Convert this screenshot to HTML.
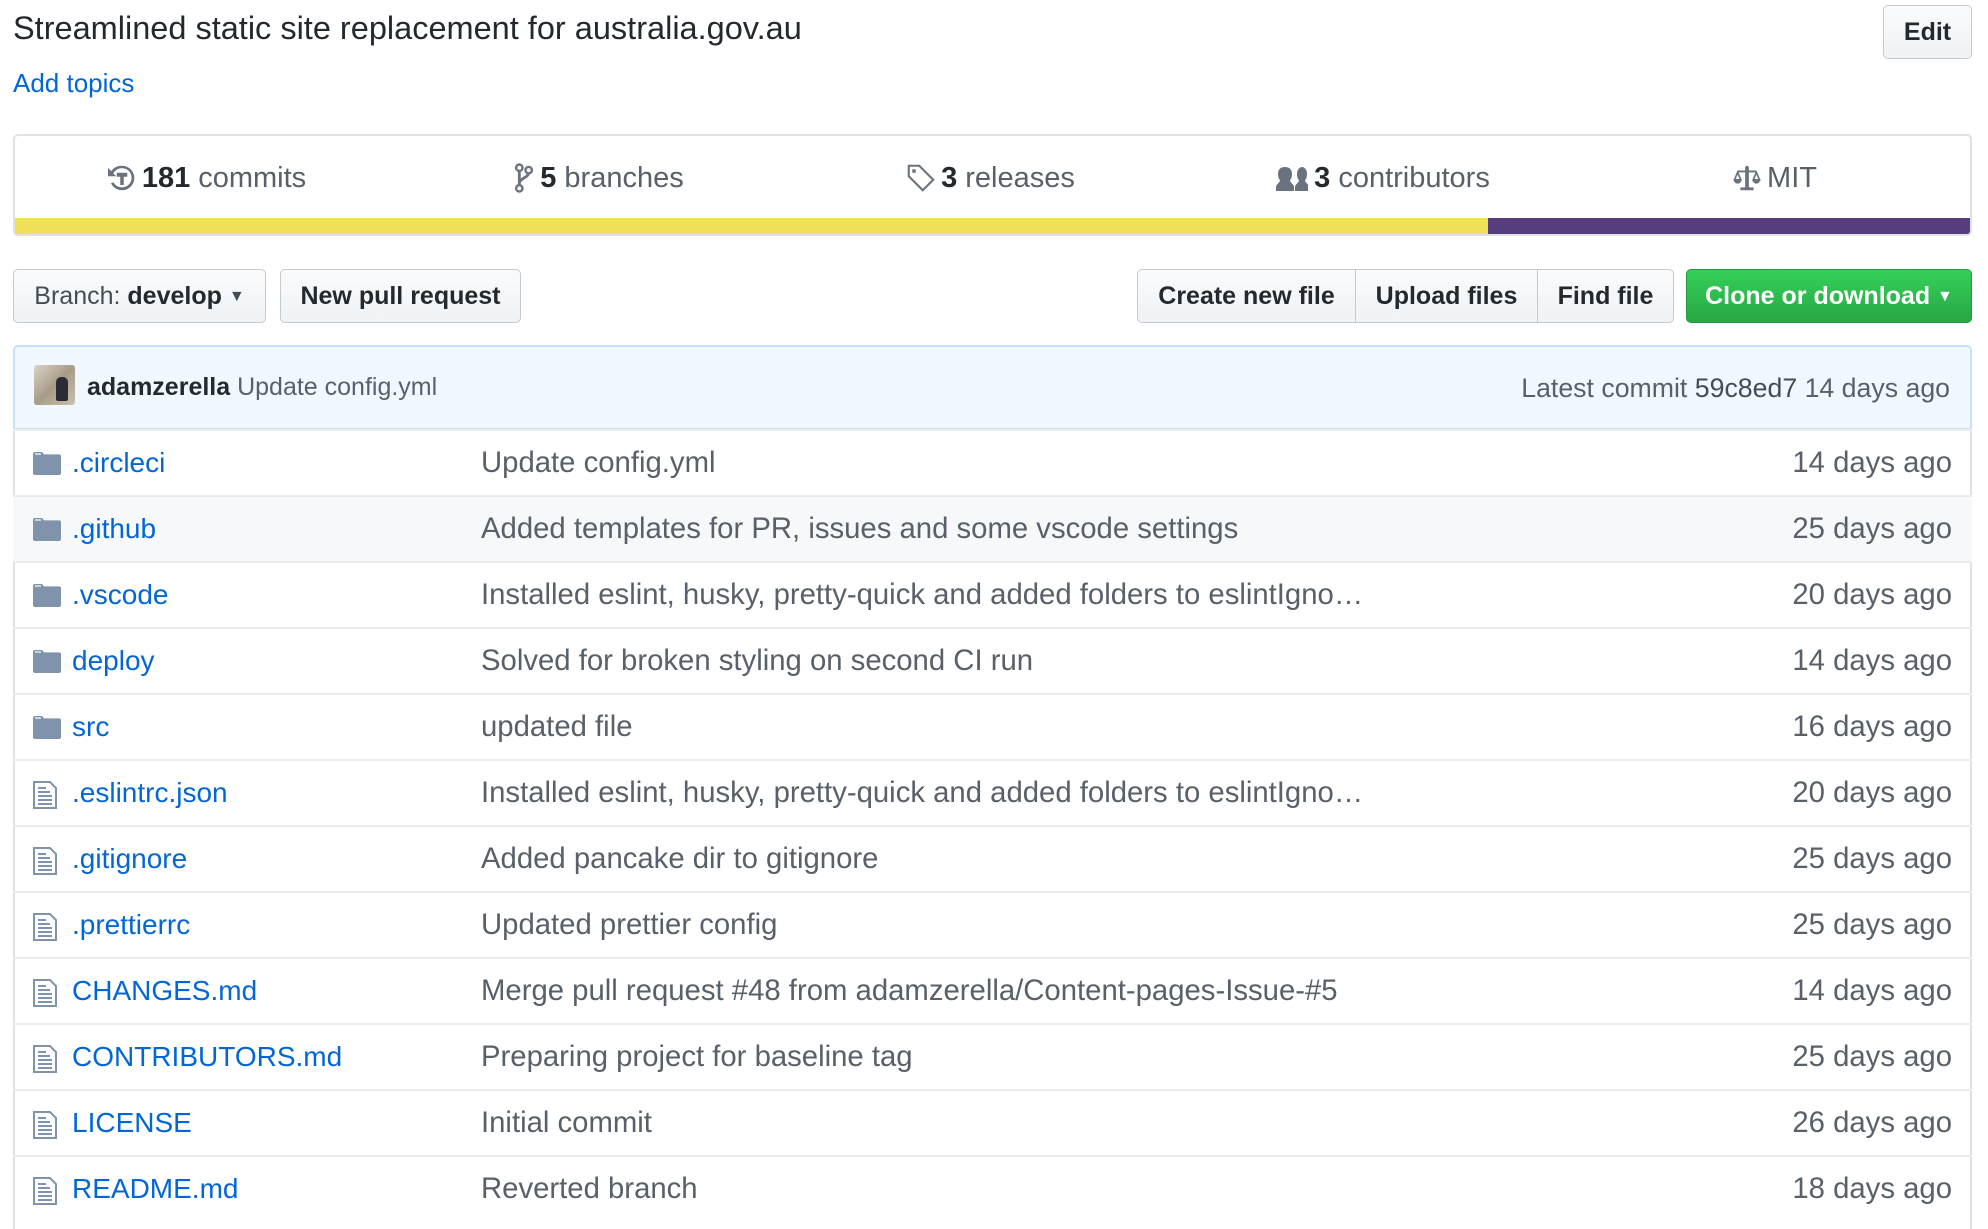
<!DOCTYPE html>
<html><head><meta charset="utf-8"><style>
*{box-sizing:border-box;margin:0;padding:0}
body{width:1988px;height:1208px;overflow:hidden;background:#fff;font-family:"Liberation Sans",Arial,sans-serif;color:#24292e;position:relative}
.abs{position:absolute}
.title{left:13px;top:7px;font-size:32.5px;line-height:42px;color:#24292e}
.topics{left:13px;top:68px;font-size:26px;line-height:30px;color:#0366d6}
.btn{position:absolute;height:54px;border:1px solid #c6cacf;border-radius:5px;background:linear-gradient(#fafbfc,#eff3f6);font-size:25px;font-weight:bold;line-height:52px;text-align:center;color:#24292e}
.stats{left:13px;top:134px;width:1959px;height:102px;border:2px solid #dfe2e5;border-radius:5px;overflow:hidden}
.stat{position:absolute;top:0;height:84px;width:392px;display:flex;align-items:center;justify-content:center;font-size:29px;color:#586069}
.stat b{color:#24292e;margin:0 8px 0 6px}
.bar{position:absolute;left:0;top:82px;height:18px;width:100%;background:#563d7c}
.bar i{position:absolute;left:0;top:0;height:18px;width:1473px;background:#f1e05a}
.commit{left:13px;top:345px;width:1959px;height:85px;background:#f1f8ff;border:2px solid #c8e1ff;border-radius:5px 5px 0 0}
.rows{left:13px;top:429px;width:1959px;height:800px;border-left:2px solid #dfe2e5;border-right:2px solid #dfe2e5}
.row{position:absolute;left:0;width:100%;height:66px;border-top:2px solid #eaecef;font-size:29.3px}
.row .ic{position:absolute;left:20px;top:20px}
.row .n{position:absolute;left:59px;top:0;line-height:64px;color:#0366d6;font-size:28px}
.row .m{position:absolute;left:468px;top:0;line-height:64px;color:#586069}
.row .a{position:absolute;right:20px;top:0;line-height:64px;color:#586069}
</style></head><body>
<div class="abs title">Streamlined static site replacement for australia.gov.au</div>
<div class="btn" style="left:1883px;top:5px;width:89px;">Edit</div>
<div class="abs topics">Add topics</div>

<div class="abs stats">
 <div class="stat" style="left:-4px"><svg width="28" height="28" viewBox="0 0 16 16"><path fill="#6a737d" d="M8 1a7 7 0 1 1-6.3 10l1.4-.6A5.5 5.5 0 1 0 3 5.5L4.8 7H0V2.2l1.9 1.9A7 7 0 0 1 8 1zM5 5h6v2.3H9V12H7V7.3H5z"/></svg><b>181</b>commits</div>
 <div class="stat" style="left:388px"><svg width="20" height="30" viewBox="0 0 10 16"><path fill="none" stroke="#6a737d" stroke-width="1.5" d="M2.5 3v10M2.5 11c0-3 5-3 5-6"/><circle cx="2.5" cy="2.5" r="1.7" fill="#fff" stroke="#6a737d" stroke-width="1.3"/><circle cx="7.5" cy="3.8" r="1.7" fill="#fff" stroke="#6a737d" stroke-width="1.3"/><circle cx="2.5" cy="13.5" r="1.7" fill="#fff" stroke="#6a737d" stroke-width="1.3"/></svg><b>5</b>branches</div>
 <div class="stat" style="left:780px"><svg width="28" height="28" viewBox="0 0 16 16"><path fill="none" stroke="#6a737d" stroke-width="1.2" d="M1 1h6l8 8-6 6-8-8z"/><rect x="3" y="3" width="2" height="2" fill="#6a737d"/></svg><b>3</b>releases</div>
 <div class="stat" style="left:1172px"><svg width="32" height="26" viewBox="0 0 16 13"><path fill="#6a737d" d="M9.5 13v-2c0-1.5 2-2 2-3.5 0 0-1-.5-1-3S12 1 13 1s2.5 1 2.5 3.5-1 3-1 3c0 1.5 2 2 2 3.5v2zM0 13v-2c0-1.5 2-2 2-3.5 0 0-1-.5-1-3S2.5 1 4.5 1 8 2 8 4.5s-1 3-1 3c0 1.5 2 2 2 3.5v2z"/></svg><b>3</b>contributors</div>
 <div class="stat" style="left:1564px"><svg width="28" height="30" viewBox="0 0 14 16"><path fill="#6a737d" d="M6 2.5a1 1 0 1 1 2 0V4h4v1H8v8h2.5v1.5h-7V13H6V5H2V4h4z"/><path fill="none" stroke="#6a737d" stroke-width=".9" d="M2 5L.3 9h3.4zM12 5l-1.7 4h3.4z"/><path fill="#6a737d" d="M0 9h4a2 2 0 0 1-4 0zM10 9h4a2 2 0 0 1-4 0z"/></svg><span style="margin-left:6px">MIT</span></div>
 <div class="bar"><i></i></div>
</div>

<div class="btn" style="left:13px;top:269px;width:253px;font-weight:normal;color:#444d56">Branch: <b style="color:#24292e">develop</b> <span style="font-size:16px;vertical-align:3px">▼</span></div>
<div class="btn" style="left:280px;top:269px;width:241px">New pull request</div>
<div class="btn" style="left:1137px;top:269px;width:219px;border-radius:5px 0 0 5px">Create new file</div>
<div class="btn" style="left:1355px;top:269px;width:183px;border-radius:0">Upload files</div>
<div class="btn" style="left:1537px;top:269px;width:137px;border-radius:0 5px 5px 0">Find file</div>
<div class="btn" style="left:1686px;top:269px;width:286px;background:linear-gradient(#34d058,#28a745);border-color:#259a3f;color:#fff">Clone or download <span style="font-size:16px;vertical-align:3px">▼</span></div>

<div class="abs commit">
 <div class="abs" style="left:19px;top:18px;width:41px;height:40px;border-radius:3px;background:linear-gradient(135deg,#d9d4c8,#a89c88 50%,#c9c0b0);overflow:hidden"><div class="abs" style="left:22px;top:12px;width:12px;height:24px;background:#2b2b33;border-radius:5px 5px 2px 2px"></div></div>
 <div class="abs" style="left:72px;top:0;line-height:81px;font-size:25px"><b>adamzerella</b> <span style="color:#586069">Update config.yml</span></div>
 <div class="abs" style="right:20px;top:0;line-height:83px;font-size:26.7px;color:#586069">Latest commit <span style="color:#444d56">59c8ed7</span> 14 days ago</div>
</div>

<div class="abs rows"></div>
<div class="abs rows" style="border:none">
<div class="row" style="top:0"><svg class="ic" width="28" height="24" viewBox="0 0 14 12"><path fill="#7f93aa" d="M0 1.5A1 1 0 0 1 1 .5h3.5l1 1.2H13a1 1 0 0 1 1 1V11a1 1 0 0 1-1 1H1a1 1 0 0 1-1-1z"/><rect x="1" y="1.2" width="3" height=".6" fill="#fff"/></svg><span class="n">.circleci</span><span class="m">Update config.yml</span><span class="a">14 days ago</span></div>
<div class="row" style="top:66px;background:#f6f8fa"><svg class="ic" width="28" height="24" viewBox="0 0 14 12"><path fill="#7f93aa" d="M0 1.5A1 1 0 0 1 1 .5h3.5l1 1.2H13a1 1 0 0 1 1 1V11a1 1 0 0 1-1 1H1a1 1 0 0 1-1-1z"/><rect x="1" y="1.2" width="3" height=".6" fill="#fff"/></svg><span class="n">.github</span><span class="m">Added templates for PR, issues and some vscode settings</span><span class="a">25 days ago</span></div>
<div class="row" style="top:132px"><svg class="ic" width="28" height="24" viewBox="0 0 14 12"><path fill="#7f93aa" d="M0 1.5A1 1 0 0 1 1 .5h3.5l1 1.2H13a1 1 0 0 1 1 1V11a1 1 0 0 1-1 1H1a1 1 0 0 1-1-1z"/><rect x="1" y="1.2" width="3" height=".6" fill="#fff"/></svg><span class="n">.vscode</span><span class="m">Installed eslint, husky, pretty-quick and added folders to eslintIgno…</span><span class="a">20 days ago</span></div>
<div class="row" style="top:198px"><svg class="ic" width="28" height="24" viewBox="0 0 14 12"><path fill="#7f93aa" d="M0 1.5A1 1 0 0 1 1 .5h3.5l1 1.2H13a1 1 0 0 1 1 1V11a1 1 0 0 1-1 1H1a1 1 0 0 1-1-1z"/><rect x="1" y="1.2" width="3" height=".6" fill="#fff"/></svg><span class="n">deploy</span><span class="m">Solved for broken styling on second CI run</span><span class="a">14 days ago</span></div>
<div class="row" style="top:264px"><svg class="ic" width="28" height="24" viewBox="0 0 14 12"><path fill="#7f93aa" d="M0 1.5A1 1 0 0 1 1 .5h3.5l1 1.2H13a1 1 0 0 1 1 1V11a1 1 0 0 1-1 1H1a1 1 0 0 1-1-1z"/><rect x="1" y="1.2" width="3" height=".6" fill="#fff"/></svg><span class="n">src</span><span class="m">updated file</span><span class="a">16 days ago</span></div>
<div class="row" style="top:330px"><svg class="ic" width="24" height="28" viewBox="0 0 12 14"><path fill="none" stroke="#7f93aa" stroke-width="1" d="M.5.5h8l3 3v10h-11z"/><path stroke="#7f93aa" stroke-width="1" d="M2.5 5.5h6M2.5 7.5h7M2.5 9.5h7M2.5 11.5h7M2.5 3.5h4"/></svg><span class="n">.eslintrc.json</span><span class="m">Installed eslint, husky, pretty-quick and added folders to eslintIgno…</span><span class="a">20 days ago</span></div>
<div class="row" style="top:396px"><svg class="ic" width="24" height="28" viewBox="0 0 12 14"><path fill="none" stroke="#7f93aa" stroke-width="1" d="M.5.5h8l3 3v10h-11z"/><path stroke="#7f93aa" stroke-width="1" d="M2.5 5.5h6M2.5 7.5h7M2.5 9.5h7M2.5 11.5h7M2.5 3.5h4"/></svg><span class="n">.gitignore</span><span class="m">Added pancake dir to gitignore</span><span class="a">25 days ago</span></div>
<div class="row" style="top:462px"><svg class="ic" width="24" height="28" viewBox="0 0 12 14"><path fill="none" stroke="#7f93aa" stroke-width="1" d="M.5.5h8l3 3v10h-11z"/><path stroke="#7f93aa" stroke-width="1" d="M2.5 5.5h6M2.5 7.5h7M2.5 9.5h7M2.5 11.5h7M2.5 3.5h4"/></svg><span class="n">.prettierrc</span><span class="m">Updated prettier config</span><span class="a">25 days ago</span></div>
<div class="row" style="top:528px"><svg class="ic" width="24" height="28" viewBox="0 0 12 14"><path fill="none" stroke="#7f93aa" stroke-width="1" d="M.5.5h8l3 3v10h-11z"/><path stroke="#7f93aa" stroke-width="1" d="M2.5 5.5h6M2.5 7.5h7M2.5 9.5h7M2.5 11.5h7M2.5 3.5h4"/></svg><span class="n">CHANGES.md</span><span class="m">Merge pull request #48 from adamzerella/Content-pages-Issue-#5</span><span class="a">14 days ago</span></div>
<div class="row" style="top:594px"><svg class="ic" width="24" height="28" viewBox="0 0 12 14"><path fill="none" stroke="#7f93aa" stroke-width="1" d="M.5.5h8l3 3v10h-11z"/><path stroke="#7f93aa" stroke-width="1" d="M2.5 5.5h6M2.5 7.5h7M2.5 9.5h7M2.5 11.5h7M2.5 3.5h4"/></svg><span class="n">CONTRIBUTORS.md</span><span class="m">Preparing project for baseline tag</span><span class="a">25 days ago</span></div>
<div class="row" style="top:660px"><svg class="ic" width="24" height="28" viewBox="0 0 12 14"><path fill="none" stroke="#7f93aa" stroke-width="1" d="M.5.5h8l3 3v10h-11z"/><path stroke="#7f93aa" stroke-width="1" d="M2.5 5.5h6M2.5 7.5h7M2.5 9.5h7M2.5 11.5h7M2.5 3.5h4"/></svg><span class="n">LICENSE</span><span class="m">Initial commit</span><span class="a">26 days ago</span></div>
<div class="row" style="top:726px"><svg class="ic" width="24" height="28" viewBox="0 0 12 14"><path fill="none" stroke="#7f93aa" stroke-width="1" d="M.5.5h8l3 3v10h-11z"/><path stroke="#7f93aa" stroke-width="1" d="M2.5 5.5h6M2.5 7.5h7M2.5 9.5h7M2.5 11.5h7M2.5 3.5h4"/></svg><span class="n">README.md</span><span class="m">Reverted branch</span><span class="a">18 days ago</span></div>
</div>
</body></html>
